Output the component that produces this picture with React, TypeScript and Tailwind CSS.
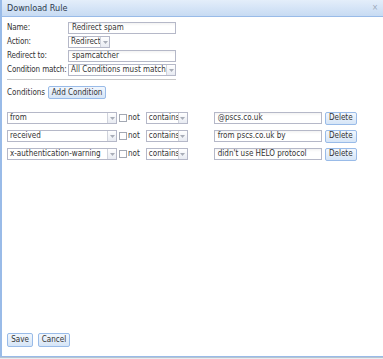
import React from 'react';

const font = { fontFamily: '"DejaVu Sans Condensed", "DejaVu Sans", sans-serif' };

const TextBox: React.FC<{ value: string; width: string }> = ({ value, width }) => (
  <div className={`${width} h-[12px] border border-[#b5b8c8] bg-white bg-gradient-to-b from-[#f3f3f3] to-white to-[30%] px-[3px] flex items-center text-[8px] leading-none text-[#333] overflow-hidden whitespace-nowrap`}>
    {value}
  </div>
);

const SelectBox: React.FC<{ value: string; width: string }> = ({ value, width }) => (
  <div className={`${width} h-[12px] border border-[#b5b8c8] bg-white flex items-stretch text-[8px] leading-none text-[#333]`}>
    <div className="flex-1 px-[2px] flex items-center overflow-hidden whitespace-nowrap">{value}</div>
    <div className="w-[9px] border-l border-[#d0d3dc] bg-gradient-to-b from-white to-[#e8ebf2] flex items-center justify-center">
      <svg width="5" height="3" viewBox="0 0 5 3">
        <path d="M0 0h5L2.5 3z" fill="#a8adb8" />
      </svg>
    </div>
  </div>
);

const Button: React.FC<{ label: string; width: string; height?: string }> = ({ label, width, height = 'h-[14px]' }) => (
  <div className={`${width} ${height} rounded-[2px] border border-[#99bbe8] bg-gradient-to-b from-[#f2f7fd] to-[#d6e5f7] flex items-center justify-center text-[8px] leading-none text-[#333]`}>
    {label}
  </div>
);

const FormRow: React.FC<{ label: string; children: React.ReactNode }> = ({ label, children }) => (
  <div className="flex items-center h-[12px]">
    <div className="w-[61px] text-[8px] leading-none tracking-[-0.15px] text-[#333] whitespace-nowrap">{label}</div>
    {children}
  </div>
);

const conditions = [
  { field: 'from', value: '@pscs.co.uk' },
  { field: 'received', value: 'from pscs.co.uk by' },
  { field: 'x-authentication-warning', value: "didn't use HELO protocol" },
];

export default function App() {
  return (
    <div className="w-[383px] h-[359px] bg-white overflow-hidden flex flex-col" style={font}>
      <div className="h-[357px] flex flex-col border-l-2 border-b border-[#99bbe8]">
        {/* Title bar */}
        <div className="h-[17px] border-b border-[#99bbe8] bg-gradient-to-b from-[#e4eefa] to-[#c7dbf3] flex items-center justify-between pl-[5px] pr-[5px]">
          <span className="text-[9px] leading-none text-[#2d3a4d]">Download Rule</span>
          <span className="text-[8px] leading-none text-[#9aa7b8]">×</span>
        </div>

        <div className="flex-1 pl-[5px] pt-[5px] flex flex-col">
          <div className="flex flex-col gap-[2px]">
            <FormRow label="Name:">
              <TextBox value="Redirect spam" width="w-[108px]" />
            </FormRow>
            <FormRow label="Action:">
              <SelectBox value="Redirect" width="w-[42px]" />
            </FormRow>
            <FormRow label="Redirect to:">
              <TextBox value="spamcatcher" width="w-[108px]" />
            </FormRow>
            <FormRow label="Condition match:">
              <SelectBox value="All Conditions must match" width="w-[108px]" />
            </FormRow>
          </div>

          <div className="w-[169px] h-px bg-[#c8c8c8] mt-[3px]" />

          <div className="flex items-center mt-[6px] gap-[3px]">
            <span className="text-[8px] leading-none text-[#333]">Conditions</span>
            <Button label="Add Condition" width="w-[58px]" height="h-[13px]" />
          </div>

          <div className="flex flex-col gap-[6px] mt-[13px]">
            {conditions.map((c) => (
              <div key={c.field} className="flex items-center h-[12px]">
                <SelectBox value={c.field} width="w-[110px]" />
                <div className="w-[8px] h-[8px] border border-[#a3a8b3] bg-white ml-[2px]" />
                <span className="text-[8px] leading-none text-[#333] ml-[1px]">not</span>
                <div className="ml-[6px]">
                  <SelectBox value="contains" width="w-[42px]" />
                </div>
                <div className="ml-[26px]">
                  <TextBox value={c.value} width="w-[108px]" />
                </div>
                <div className="ml-[3px]">
                  <Button label="Delete" width="w-[32px]" height="h-[13px]" />
                </div>
              </div>
            ))}
          </div>

          <div className="flex-1" />

          <div className="flex gap-[5px] pb-[9px]">
            <Button label="Save" width="w-[26px]" />
            <Button label="Cancel" width="w-[32px]" />
          </div>
        </div>
      </div>
      <div className="flex-1 bg-[#e9edf1] border-t border-[#b7c4d1]" />
    </div>
  );
}
